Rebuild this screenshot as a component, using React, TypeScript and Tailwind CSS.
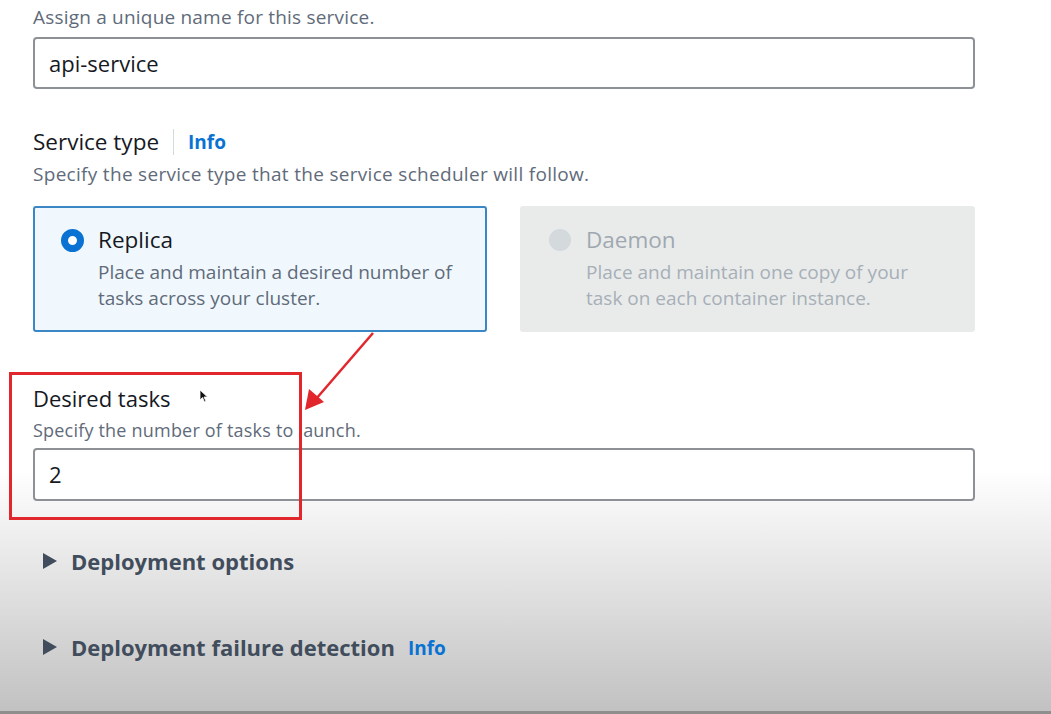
import React from "react";

const App: React.FC = () => {
  return (
    <div className="relative w-[1051px] h-[714px] overflow-hidden bg-[linear-gradient(to_bottom,#ffffff_0px,#ffffff_470px,#c2c2c2_709px)] border-b-[3px] border-[#8e8e8e] font-['Open_Sans',sans-serif] text-[#16191f]">
      <div className="ml-[33px] w-[942px]">
        {/* service name */}
        <p className="mt-[5px] text-[19px] leading-[24px] text-[#5f6b7a] tracking-[0.2px]">
          Assign a unique name for this service.
        </p>
        <div className="mt-[8px] h-[52px] flex items-center px-[14px] border-2 border-[#8d9196] rounded-[4px] bg-white text-[22px]">
          api-service
        </div>

        {/* service type */}
        <div className="mt-[38px] flex items-center h-[30px]">
          <span className="text-[22.5px]">Service type</span>
          <span className="mx-[14px] h-[26px] w-px bg-[#d5dbdb]" />
          <span className="text-[19px] font-bold text-[#0972d3]">Info</span>
        </div>
        <p className="mt-[5px] text-[19px] leading-[24px] text-[#5f6b7a] tracking-[0.3px]">
          Specify the service type that the service scheduler will follow.
        </p>

        <div className="mt-[20px] flex gap-[33px]">
          <div className="w-[454px] h-[126px] border-2 border-[#3b86c4] rounded-[3px] bg-[#f1f8fd] flex pt-[17px] pl-[26px]">
            <span className="mt-[4px] w-[23px] h-[23px] rounded-full border-[7px] border-[#0972d3] bg-white shrink-0" />
            <div className="ml-[14px]">
              <div className="text-[22.5px] leading-[30px]">Replica</div>
              <div className="mt-[4px] text-[19px] leading-[26px] text-[#5f6b7a] w-[375px]">
                Place and maintain a desired number of tasks across your cluster.
              </div>
            </div>
          </div>
          <div className="w-[455px] h-[126px] rounded-[3px] bg-[#e9ebeb] flex pt-[19px] pl-[29px]">
            <span className="mt-[4px] w-[22px] h-[22px] rounded-full bg-[#d4d9dc] shrink-0" />
            <div className="ml-[15px]">
              <div className="text-[22.5px] leading-[30px] text-[#9fa8b0]">Daemon</div>
              <div className="mt-[4px] text-[19px] leading-[26px] text-[#a7afb7] w-[345px]">
                Place and maintain one copy of your task on each container instance.
              </div>
            </div>
          </div>
        </div>

        {/* desired tasks */}
        <div className="mt-[51px] text-[22px] leading-[30px]">Desired tasks</div>
        <p className="mt-[5px] text-[18px] leading-[24px] text-[#5f6b7a] tracking-[0.2px]">
          Specify the number of tasks to launch.
        </p>
        <div className="mt-[6px] h-[53px] flex items-center px-[14px] border-2 border-[#8d9196] rounded-[4px] bg-white text-[22px]">
          2
        </div>

        {/* expandable sections */}
        <div className="mt-[45px] flex items-center h-[30px] ml-[9px]">
          <svg width="16" height="18" viewBox="0 0 16 18" className="shrink-0">
            <path d="M1 1 L15 9 L1 17 Z" fill="#414d5c" />
          </svg>
          <span className="ml-[13px] text-[22px] font-bold text-[#414d5c]">Deployment options</span>
        </div>
        <div className="mt-[56px] flex items-center h-[30px] ml-[9px]">
          <svg width="16" height="18" viewBox="0 0 16 18" className="shrink-0">
            <path d="M1 1 L15 9 L1 17 Z" fill="#414d5c" />
          </svg>
          <span className="ml-[13px] text-[22px] font-bold text-[#414d5c]">Deployment failure detection</span>
          <span className="ml-[13px] mt-[3px] text-[19px] font-bold text-[#0972d3]">Info</span>
        </div>
      </div>

      {/* red annotation */}
      <div className="absolute left-[9px] top-[372px] w-[293px] h-[148px] border-[3px] border-[#e1262c]" />
      <svg className="absolute left-0 top-0 pointer-events-none" width="1051" height="714">
        <line x1="373" y1="333" x2="316" y2="399" stroke="#e1262c" strokeWidth="2.5" />
        <path d="M305 410 L309 389 L324 402 Z" fill="#e1262c" />
      </svg>

      {/* mouse cursor */}
      <svg className="absolute left-[199px] top-[389px]" width="10" height="14" viewBox="0 0 10 14">
        <path d="M1 1 L1 11 L3.5 8.5 L5.5 13 L7 12.3 L5 8 L8.5 8 Z" fill="#111" stroke="#fff" strokeWidth="0.8" />
      </svg>
    </div>
  );
};

export default App;
